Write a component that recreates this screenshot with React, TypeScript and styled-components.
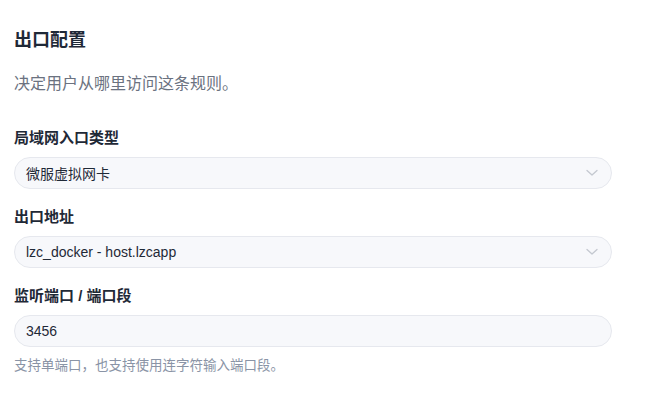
import React from "react";
import styled, { createGlobalStyle } from "styled-components";

const Global = createGlobalStyle`
  html, body { margin: 0; padding: 0; background: #ffffff; }
  body {
    font-family: "Liberation Sans", "Noto Sans CJK SC", Arial, sans-serif;
    color: #1f2937;
    -webkit-font-smoothing: antialiased;
  }
  * { box-sizing: border-box; }
`;

const Section = styled.section`
  width: 646px;
  padding: 26px 14px 20px 14px;
  display: flex;
  flex-direction: column;
`;

const Title = styled.h2`
  margin: 0;
  font-size: 18px;
  line-height: 28px;
  font-weight: 700;
  color: #1f2937;
`;

const Subtitle = styled.p`
  margin: 18px 0 0 0;
  font-size: 16px;
  line-height: 24px;
  color: #6b7280;
`;

const Fields = styled.div`
  margin-top: 31px;
  display: flex;
  flex-direction: column;
  gap: 17px;
`;

const Field = styled.div`
  display: flex;
  flex-direction: column;
  gap: 8px;
`;

const Label = styled.label`
  font-size: 15px;
  line-height: 22px;
  font-weight: 700;
  color: #1f2937;
`;

const Control = styled.div`
  width: 598px;
  height: 32px;
  border: 1px solid #e6e8ee;
  border-radius: 16px;
  background: #f7f8fb;
  display: flex;
  align-items: center;
  justify-content: space-between;
  padding: 0 13px 0 11px;
  font-size: 14px;
  color: #1f2937;
`;

const Input = styled.input`
  width: 598px;
  height: 32px;
  border: 1px solid #e6e8ee;
  border-radius: 16px;
  background: #f7f8fb;
  padding: 0 11px;
  font-family: inherit;
  font-size: 14px;
  color: #1f2937;
  outline: none;
`;

const Help = styled.p`
  margin: 1px 0 0 0;
  font-size: 13.5px;
  line-height: 20px;
  color: #8a94a6;
`;

const Chevron = () => (
  <svg width="12" height="8" viewBox="0 0 12 8" fill="none">
    <path d="M1 1.5 L6 6 L11 1.5" stroke="#c4c8d0" strokeWidth="1.3" strokeLinecap="round" strokeLinejoin="round" />
  </svg>
);

const Select = ({ value }: { value: string }) => (
  <Control role="combobox">
    <span>{value}</span>
    <Chevron />
  </Control>
);

export default function App() {
  return (
    <>
      <Global />
      <Section>
        <Title>出口配置</Title>
        <Subtitle>决定用户从哪里访问这条规则。</Subtitle>
        <Fields>
          <Field>
            <Label>局域网入口类型</Label>
            <Select value="微服虚拟网卡" />
          </Field>
          <Field>
            <Label>出口地址</Label>
            <Select value="lzc_docker - host.lzcapp" />
          </Field>
          <Field>
            <Label>监听端口 / 端口段</Label>
            <Input defaultValue="3456" />
            <Help>支持单端口，也支持使用连字符输入端口段。</Help>
          </Field>
        </Fields>
      </Section>
    </>
  );
}
